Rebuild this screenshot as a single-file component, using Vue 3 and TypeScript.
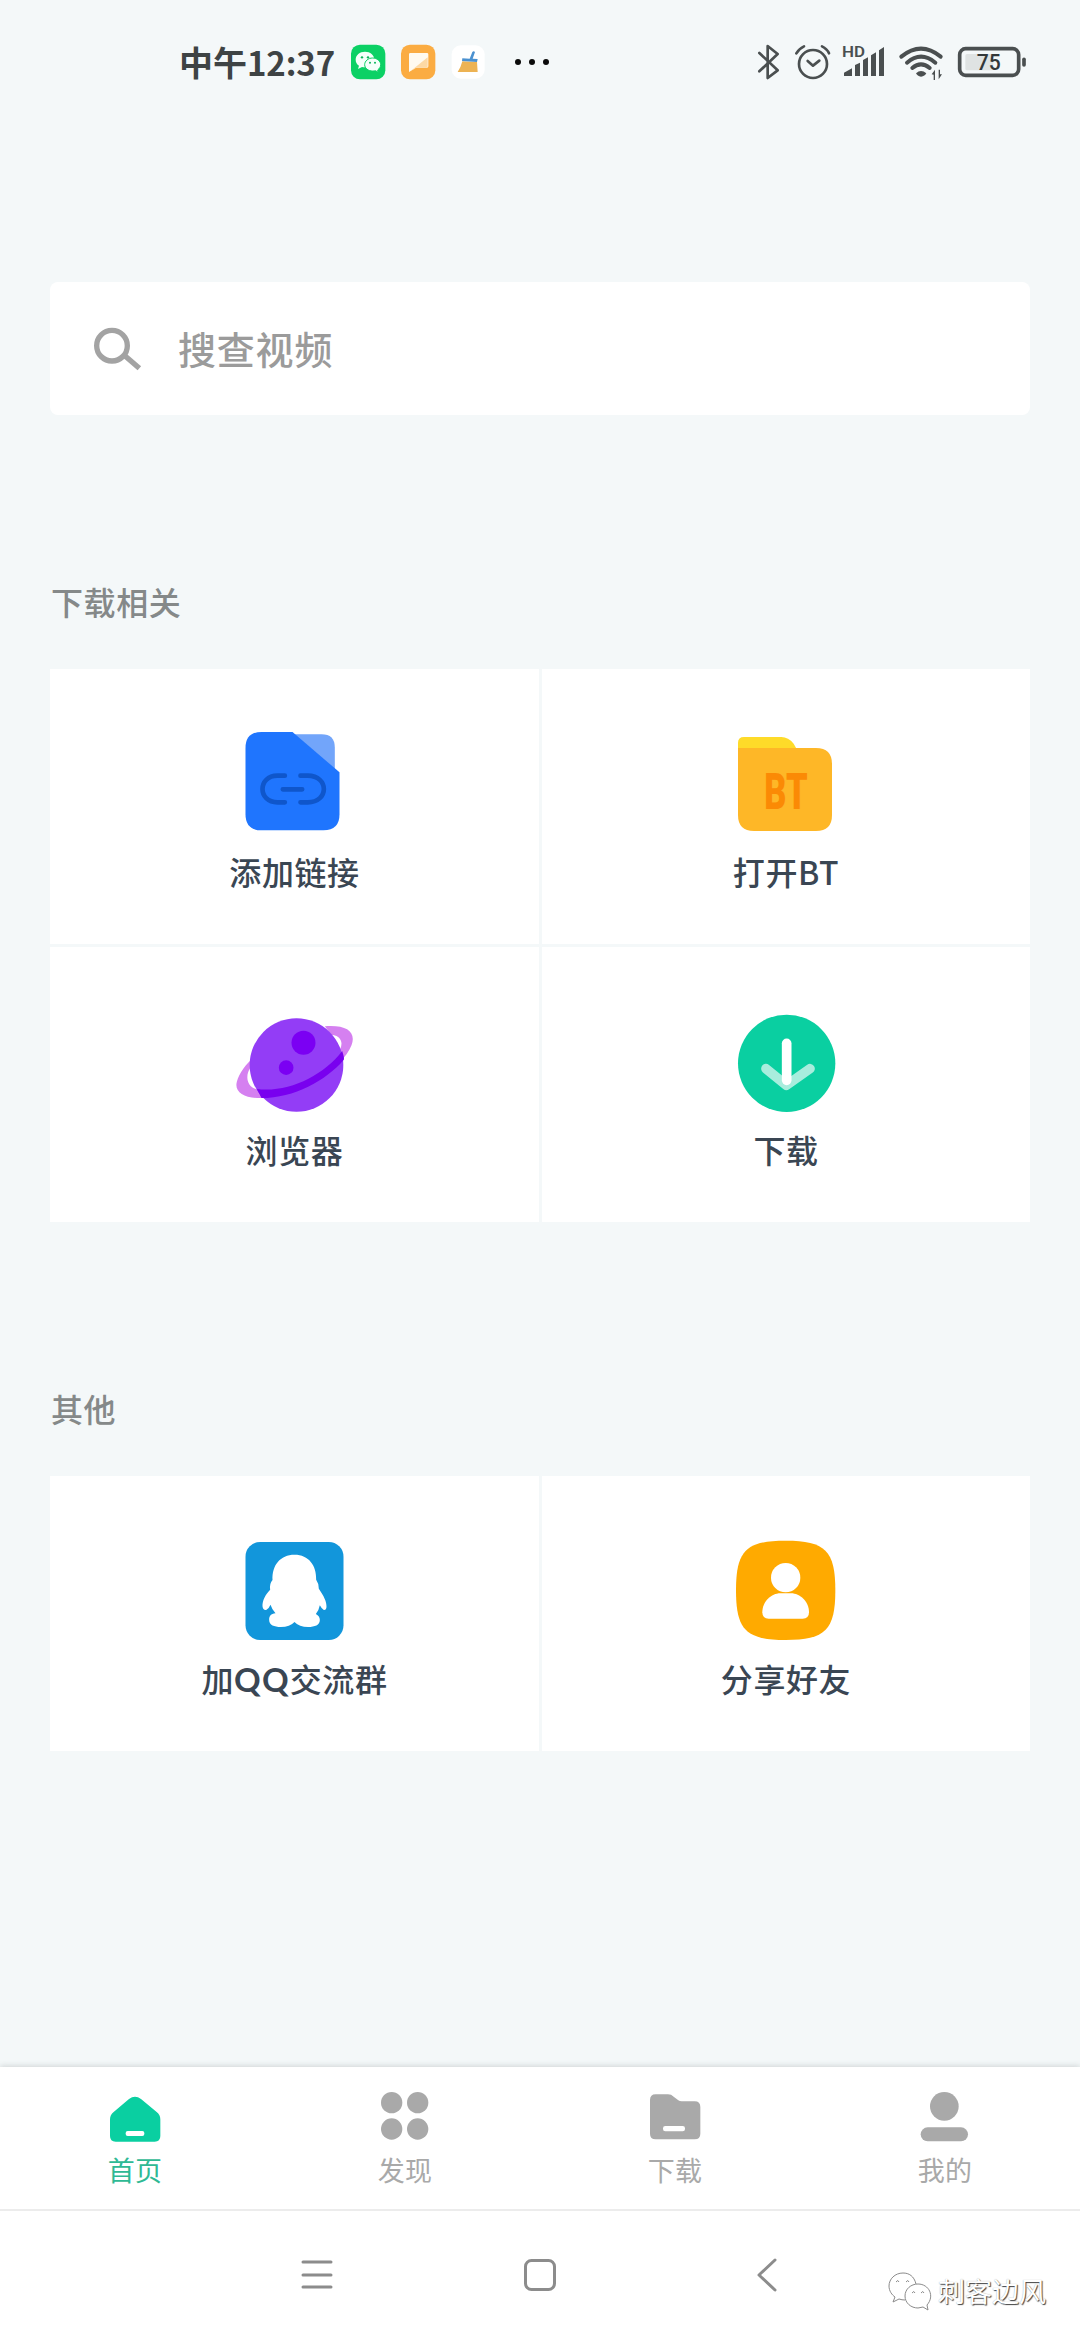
<script setup lang="ts">
interface Tile {
  icon: string
  label: string
  latin?: string
  tail?: string
  box: string
}

interface Section {
  title: string
  tiles: Tile[]
}

const sections: Section[] = [
  {
    title: '下载相关',
    tiles: [
      { icon: 'link', label: '添加链接', box: '58.5 45 390 330' },
      { icon: 'bt', label: '打开BT', box: '33 45 390 330' },
      { icon: 'planet', label: '浏览器', box: '58.5 36 390 330' },
      { icon: 'download', label: '下载', box: '33 36 390 330' },
    ],
  },
  {
    title: '其他',
    tiles: [
      { icon: 'qq', label: '加', latin: 'QQ', tail: '交流群', box: '148.5 36 390 330' },
      { icon: 'share', label: '分享好友', box: '63 36 390 330' },
    ],
  },
]

const tabs = [
  { icon: 'home', label: '首页', active: true },
  { icon: 'discover', label: '发现', active: false },
  { icon: 'folder', label: '下载', active: false },
  { icon: 'me', label: '我的', active: false },
]
</script>

<template>
  <div class="screen">
    <header class="status">
      <span class="clock">中午<span class="digits">12:37</span></span>
      <svg class="notices" viewBox="555 0 705 210">
        <rect x="573" y="44" width="103" height="104" rx="27" fill="#0bd165" />
        <g fill="#f5fffa">
          <path d="M615 65c-16 0-28 10-28 24 0 8 4 14 10 18l-3 10 12-6c3 1 6 1 9 1 16 0 28-9 28-23s-12-24-28-24z" />
          <path d="M638 84c13 0 24 9 24 20 0 7-4 12-9 16l2 7-9-5c-2 1-5 1-8 1-13 0-24-8-24-19s11-20 24-20z" stroke="#0bd165" stroke-width="3" />
        </g>
        <g fill="#0bb65a">
          <circle cx="606" cy="82" r="3.5" /><circle cx="624" cy="82" r="3.5" />
          <circle cx="630" cy="98" r="3" /><circle cx="645" cy="98" r="3" />
        </g>
        <rect x="723" y="44" width="103" height="104" rx="27" fill="#fbac42" />
        <path d="M751 69h50q4 0 4 4v36q0 4-4 4h-33l-21 13V73q0-4 4-4z" fill="#fffaf0" />
        <path d="M803 82v27q0 4-4 4h-31l-17 11z" fill="#fdd9a5" />
        <rect x="875" y="46" width="99" height="100" rx="27" fill="#fff" />
        <path d="M907 94l44 2 2 30h-60q9-12 14-32z" fill="#edb353" />
        <path d="M907 85l22 1 8-20q4-4 8 0l-7 20 15 1-2 9-45-3z" fill="#4b91d0" />
        <g fill="#0b0b0b">
          <circle cx="1074" cy="96" r="9" /><circle cx="1116" cy="96" r="9" /><circle cx="1158" cy="96" r="9" />
        </g>
      </svg>
      <svg class="system" viewBox="0 0 960 210" fill="none" stroke="#4a4f50">
        <path d="M88 69l55 52-30 23V48l30 24-55 52" stroke-width="8" stroke-linejoin="round" stroke-linecap="round" />
        <circle cx="249" cy="102" r="42" stroke-width="8" />
        <path d="M233 93l16 14 19-15" stroke-width="8" stroke-linecap="round" stroke-linejoin="round" />
        <path d="M199 70q8-14 23-21M276 49q15 7 21 21" stroke-width="8" stroke-linecap="round" />
        <g fill="#4a4f50" stroke="none">
          <text class="hd" x="336" y="81" textLength="69" lengthAdjust="spacingAndGlyphs">HD</text>
          <path d="M342 138v-10l24-13v23zM375 138v-33l15-7v40zM399 138V90l15-8v56zM423 138V76l15-9v71zM447 138V61l15-10v87z" />
          <path d="M558 130q15-14 31 0-4 9-16 10-11-1-15-10z" />
          <path d="M605 133l10-14v31h-4v-16zM636 133l-10 15v-29h4v14z" />
        </g>
        <path d="M514 80q59-48 118 0M531 98q42-36 85 0M547 114q26-22 52 0" stroke-width="12" stroke-linecap="round" />
        <rect x="689" y="56" width="177" height="80" rx="18" stroke-width="11" />
        <rect x="706" y="72" width="84" height="49" rx="5" fill="#dfe3e3" stroke="none" />
        <path d="M882 88v17" stroke-width="11" stroke-linecap="round" />
        <text class="charge" x="740" y="121" fill="#333839" stroke="none" textLength="72" lengthAdjust="spacingAndGlyphs">75</text>
      </svg>
    </header>

    <main class="content">
      <div class="search">
        <svg class="lens" viewBox="186 165 153 138" fill="none" stroke="#a3a3a3">
          <circle cx="246" cy="224" r="46" stroke-width="16" />
          <path d="M281 251l47 41" stroke-width="16" />
        </svg>
        <span class="placeholder">搜查视频</span>
      </div>

      <section v-for="section in sections" :key="section.title" class="section">
        <h2 class="heading">{{ section.title }}</h2>
        <div class="grid">
          <div v-for="tile in section.tiles" :key="tile.icon" class="tile">
            <svg class="tile-icon" :viewBox="tile.box">
              <g v-if="tile.icon === 'link'">
                <path d="M240 73h93q40 0 40 40v90z" fill="#72a5fa" />
                <path d="M153 66h93l141 121v126q0 48-48 48H153q-48 0-48-48V114q0-48 48-48z" fill="#1f75fe" />
                <path d="M223 197h-22c-60 0-60 80 0 80h22M270 197h22c64 0 64 80 0 80h-22M217 238h58" fill="none" stroke="#0f56cb" stroke-width="14" stroke-linecap="round" />
              </g>
              <g v-else-if="tile.icon === 'bt'">
                <path d="M84 130V98q0-17 18-17h112q21 0 37 20l16 29z" fill="#fedb29" />
                <path d="M84 114h234q48 0 48 48v153q0 48-48 48H132q-48 0-48-48z" fill="#feb727" />
                <text class="bt-mark" x="163" y="297" textLength="130" lengthAdjust="spacingAndGlyphs">BT</text>
              </g>
              <g v-else-if="tile.icon === 'planet'">
                <path d="M343 106C409 101 438 123 423 163C410 198 371 233 330 260C276 296 216 318 162 321C107 324 70 306 79 272C86 246 106 218 132 197L119 231C102 257 110 294 148 296C210 299 276 266 331 230C380 197 404 165 388 143Q381 132 362 131Z" fill="#d580f0" />
                <circle cx="258" cy="222" r="140.5" fill="#933df6" />
                <path d="M139 294c94 12 199-39 256-114q7 21 5 26c-54 63-149 115-247 115z" fill="#7900ef" />
                <circle cx="279" cy="155" r="36" fill="#7b00f3" />
                <circle cx="227" cy="230" r="22" fill="#7b00f3" />
              </g>
              <g v-else-if="tile.icon === 'download'">
                <circle cx="230" cy="217" r="146" fill="#0acfa1" />
                <path d="M168 233l61 50 71-50" fill="none" stroke="#a8eddd" stroke-width="29" stroke-linecap="round" stroke-linejoin="round" />
                <path d="M230 157v111" stroke="#fff" stroke-width="29" stroke-linecap="round" />
              </g>
              <g v-else-if="tile.icon === 'qq'">
                <rect x="195" y="66" width="294" height="294" rx="44" fill="#1296db" />
                <path d="M342 104c43 0 66 32 65 75q9 13 8 27c15 22 24 39 23 55q-1 10-8 9-7-4-12-14-3 16-12 26 12 6 12 18c0 15-15 21-35 21q-27 0-41-15-14 15-41 15c-20 0-35-6-35-21 0-12 5-18 19-20q-11-13-15-26-5 12-13 16-10 1-11-11c-1-17 8-34 23-50q-3-17 7-29c-2-44 23-76 66-76z" fill="#fff" />
              </g>
              <g v-else>
                <path d="M257 62c119 0 149 30 149 149s-30 149-149 149-149-30-149-149 30-149 149-149z" fill="#ffaa00" />
                <circle cx="257" cy="173" r="44" fill="#fff" />
                <path d="M187 277c0-32 27-57 54-57h32c27 0 54 25 54 57q0 19-19 19H206q-19 0-19-19z" fill="#fff" />
              </g>
            </svg>
            <span class="tile-label">{{ tile.label }}<span v-if="tile.latin" class="latin">{{ tile.latin }}</span>{{ tile.tail }}</span>
          </div>
        </div>
      </section>
    </main>

    <nav class="tabs">
      <div v-for="tab in tabs" :key="tab.icon" class="tab" :class="{ active: tab.active }">
        <svg class="tab-icon" viewBox="0 0 180 150" fill="currentColor">
          <g v-if="tab.icon === 'home'">
            <path d="M72 21q18-14 36 0l47 39q11 9 11 22v50q0 17-17 17H32q-17 0-17-17V82q0-13 11-22z" />
            <rect x="62" y="117" width="56" height="15" rx="6" fill="#fff" />
          </g>
          <g v-else-if="tab.icon === 'discover'">
            <circle cx="50" cy="32" r="32" /><circle cx="128" cy="32" r="32" />
            <circle cx="50" cy="111" r="32" /><circle cx="128" cy="111" r="32" />
          </g>
          <g v-else-if="tab.icon === 'folder'">
            <path d="M32 7h37q10 0 17 7l14 11q4 3 10 3h39q17 0 17 17v80q0 17-17 17H32q-17 0-17-17V24q0-17 17-17z" />
            <rect x="54" y="102" width="66" height="16" rx="7" fill="#fff" />
          </g>
          <g v-else>
            <circle cx="88" cy="43" r="43" />
            <rect x="17" y="106" width="142" height="42" rx="21" />
          </g>
        </svg>
        <span class="tab-label">{{ tab.label }}</span>
      </div>
    </nav>

    <div class="keys">
      <svg viewBox="0 0 60 60"><path d="M16 17h28M16 30h28M16 42h28" /></svg>
      <svg viewBox="0 0 60 60"><rect x="15.5" y="15.5" width="29" height="29" rx="6" /></svg>
      <svg viewBox="-4 0 60 60"><path d="M42 15L26 30l16 15" transform="translate(-4 0)" /></svg>
      <div class="watermark">
        <svg viewBox="0 0 46 40">
          <path d="M29 13C27 5 22 2 16 2 8 2 2 8 2 15c0 5 3 9 6 11l-2 5 6-3q3 1 6 1" />
          <path d="M31 13c-7 0-13 5-13 12s6 12 13 12l5-1 5 3-1-5c8-9 2-21-9-21z" />
          <path d="M9 11q2-3 3 0M19 11q2-3 3 0M25 22q2-3 3 0M34 22q2-3 3 0" />
        </svg>
        <span>刺客边风</span>
      </div>
    </div>
  </div>
</template>

<style>
body {
  margin: 0;
  background: #f4f8f9;
}
</style>

<style scoped>
.screen {
  width: 1080px;
  height: 2340px;
  display: flex;
  flex-direction: column;
  background: #f4f8f9;
  font-family: "Noto Sans CJK SC", sans-serif;
  overflow: hidden;
}
svg {
  display: block;
  flex: none;
}
.status {
  display: flex;
  height: 70px;
  padding: 30px 30px 0 179px;
}
.clock {
  width: 166px;
  font-size: 34px;
  line-height: 64px;
  font-weight: 700;
  color: #3e4344;
  white-space: nowrap;
}
.digits {
  font-weight: 700;
  font-size: 33px;
  letter-spacing: -0.1px;
}
.notices {
  width: 235px;
  height: 70px;
}
.system {
  width: 320px;
  height: 70px;
  margin-left: 150px;
}
.hd {
  font: 600 46px Roboto, sans-serif;
}
.charge {
  font: 500 66px Roboto, sans-serif;
}
.bt-mark {
  font: 900 148px Roboto, sans-serif;
  fill: #fb8a05;
}
.content {
  flex: 1;
  padding: 182px 50px 0;
}
.search {
  display: flex;
  align-items: center;
  height: 133px;
  padding-left: 42px;
  box-sizing: border-box;
  background: #fff;
  border-radius: 8px;
}
.lens {
  width: 51px;
  height: 46px;
}
.placeholder {
  margin: 0 0 2px 35px;
  font-size: 38px;
  line-height: 56px;
  font-weight: 500;
  letter-spacing: 0.8px;
  color: #9b9b9b;
}
.section {
  padding-top: 161px;
}
.heading {
  margin: 0 0 43px 1px;
  font-size: 32px;
  line-height: 50px;
  font-weight: 500;
  letter-spacing: 0.6px;
  color: #858989;
}
.grid {
  display: grid;
  grid-template-columns: 489px 488px;
  gap: 3px;
}
.tile {
  display: flex;
  flex-direction: column;
  align-items: center;
  height: 275px;
  padding-top: 56px;
  box-sizing: border-box;
  background: #fff;
}
.tile-icon {
  width: 130px;
  height: 110px;
}
.tile-label {
  margin-top: 12px;
  font-size: 32px;
  line-height: 48px;
  font-weight: 500;
  letter-spacing: 0.6px;
  color: #3a4653;
  white-space: nowrap;
}
.latin {
  font-family: Lato, sans-serif;
  font-weight: 700;
  font-size: 33px;
  letter-spacing: 1.2px;
}
.tabs {
  display: flex;
  height: 144px;
  background: #fff;
  box-shadow: 0 -1px 6px rgba(60, 70, 70, 0.2);
  border-bottom: 2px solid #ececec;
  box-sizing: border-box;
}
.tab {
  flex: 1;
  display: flex;
  flex-direction: column;
  align-items: center;
  padding-top: 25px;
  color: #a9a9a9;
}
.tab.active {
  color: #0acfa1;
}
.tab-icon {
  width: 60px;
  height: 50px;
}
.tab-label {
  margin-top: 8px;
  font-size: 27px;
  line-height: 40px;
  letter-spacing: 0.3px;
}
.active .tab-label {
  color: #2fb994;
}
.keys {
  position: relative;
  display: flex;
  gap: 163px;
  height: 129px;
  padding: 34px 0 0 287px;
  box-sizing: border-box;
  background: #fff;
}
.keys > svg {
  width: 60px;
  height: 60px;
  fill: none;
  stroke: #8c8c8c;
  stroke-width: 3;
  stroke-linecap: round;
  stroke-linejoin: round;
}
.watermark {
  position: absolute;
  right: 34px;
  bottom: 27px;
  display: flex;
  align-items: center;
  gap: 5px;
  font-size: 27px;
  line-height: 44px;
  color: #fff;
  white-space: nowrap;
  text-shadow: 1px 1px 1px #444, 0 0 1px #aaa;
}
.watermark svg {
  width: 46px;
  height: 40px;
  fill: none;
  stroke: #8b8b8b;
  stroke-width: 1;
}
</style>
